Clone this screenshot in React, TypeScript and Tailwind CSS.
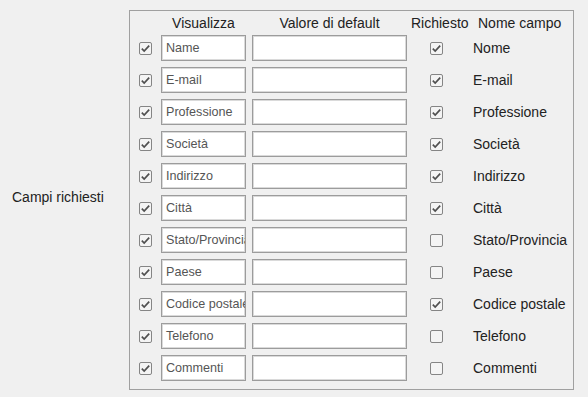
import React from "react";

type Row = { placeholder: string; label: string; show: boolean; req: boolean };

const rows: Row[] = [
  { placeholder: "Name", label: "Nome", show: true, req: true },
  { placeholder: "E-mail", label: "E-mail", show: true, req: true },
  { placeholder: "Professione", label: "Professione", show: true, req: true },
  { placeholder: "Società", label: "Società", show: true, req: true },
  { placeholder: "Indirizzo", label: "Indirizzo", show: true, req: true },
  { placeholder: "Città", label: "Città", show: true, req: true },
  { placeholder: "Stato/Provincia", label: "Stato/Provincia", show: true, req: false },
  { placeholder: "Paese", label: "Paese", show: true, req: false },
  { placeholder: "Codice postale", label: "Codice postale", show: true, req: true },
  { placeholder: "Telefono", label: "Telefono", show: true, req: false },
  { placeholder: "Commenti", label: "Commenti", show: true, req: false },
];

function Check({ checked }: { checked: boolean }) {
  return (
    <div className="w-[13px] h-[13px] shrink-0 rounded-[2px] border border-[#858585] bg-[#f4f4f4] flex items-center justify-center">
      {checked && (
        <svg width="11" height="11" viewBox="0 0 11 11">
          <path d="M1.8 5.6 L4.2 8 L9.2 2.6" fill="none" stroke="#505050" strokeWidth="1.7" />
        </svg>
      )}
    </div>
  );
}

export default function App() {
  return (
    <div
      className="w-[588px] h-[397px] bg-[#f0f0f0] text-[#222] flex items-start"
      style={{ fontFamily: '"Liberation Sans", Arial, sans-serif' }}
    >
      <div className="w-[129px] h-[397px] flex items-center pl-[12px] text-[14px]">
        <span className="-mt-[3px]">Campi richiesti</span>
      </div>
      <div className="mt-[10px] w-[445px] h-[380px] border border-[#a0a0a0] pl-[9px]">
        <div className="flex items-center h-[16px] mt-[4px] text-[14px] leading-[16px]">
          <div className="w-[13px]" />
          <div className="ml-[9px] w-[85px] text-center">Visualizza</div>
          <div className="ml-[6px] w-[155px] text-center">Valore di default</div>
          <div className="ml-[4px] w-[62px]">Richiesto</div>
          <div className="ml-[5px]">Nome campo</div>
        </div>
        <div className="mt-[4px] flex flex-col gap-[6px]">
          {rows.map((r) => (
            <div key={r.label} className="flex items-center h-[26px]">
              <Check checked={r.show} />
              <div className="ml-[9px] w-[85px] h-[26px] bg-white border border-[#9c9c9c] shadow-[inset_0_0_0_1px_#dadada] overflow-hidden flex items-center pl-[4px] pt-[1px] text-[12.6px] text-[#555] whitespace-nowrap">
                {r.placeholder}
              </div>
              <div className="ml-[6px] w-[155px] h-[26px] bg-white border border-[#9c9c9c] shadow-[inset_0_0_0_1px_#dadada]" />
              <div className="ml-[23px]">
                <Check checked={r.req} />
              </div>
              <div className="ml-[30px] text-[14px] whitespace-nowrap">{r.label}</div>
            </div>
          ))}
        </div>
      </div>
    </div>
  );
}
